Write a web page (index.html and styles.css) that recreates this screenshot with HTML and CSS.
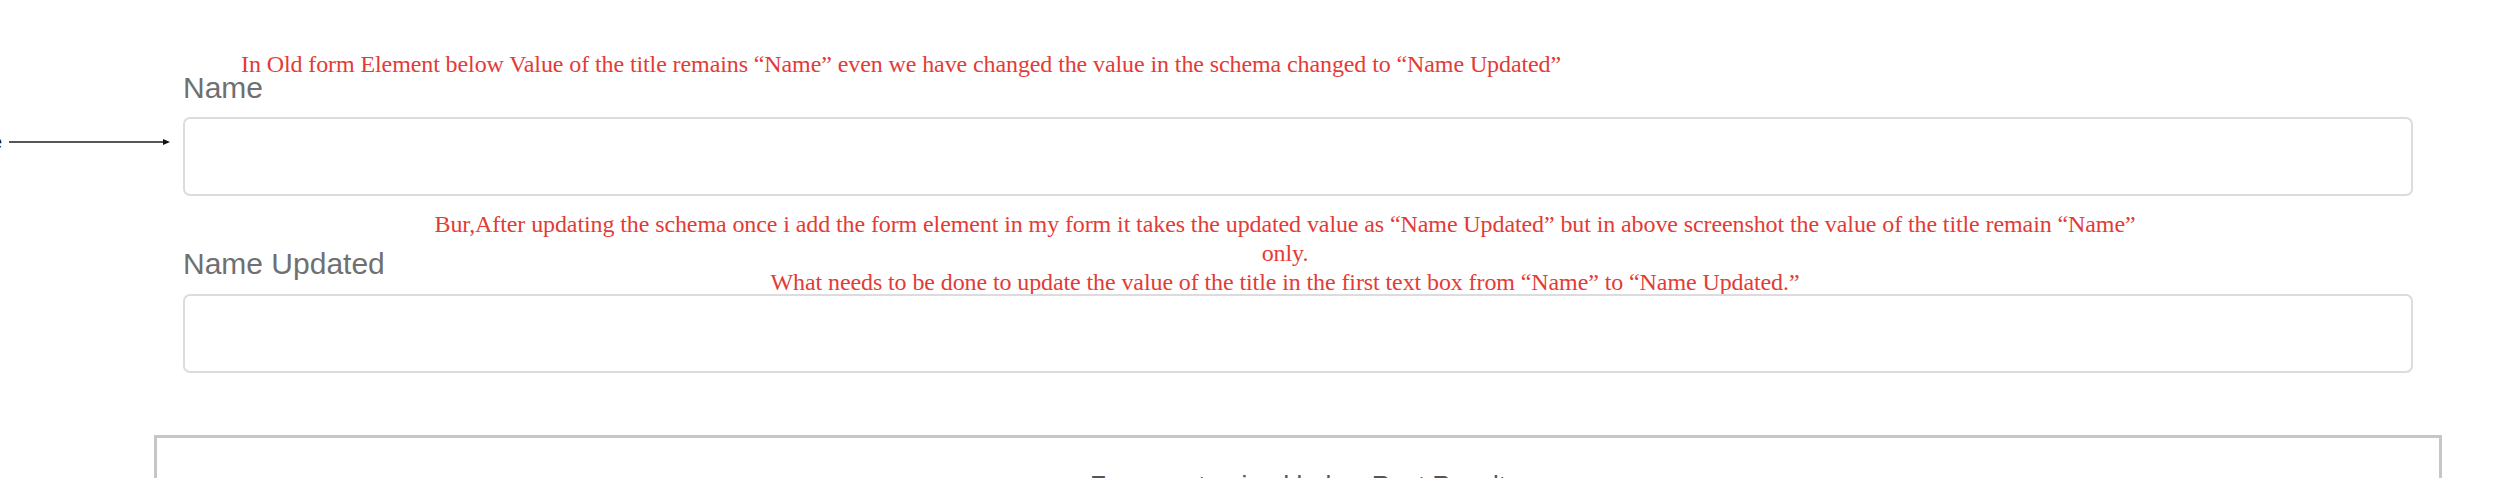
FILE: index.html
```html
<!DOCTYPE html>
<html lang="en">
  <head>
    <meta charset="UTF-8" />
    <meta name="viewport" content="width=device-width, initial-scale=1.0" />
    <title>Form title question</title>
    <link rel="stylesheet" href="styles.css">
  </head>
  <body>
    <div class="page">
      <div class="note note-top">In Old form Element below Value of the title remains “Name” even we have changed the value in the schema changed to “Name Updated”</div>

      <div class="field-label first">Name</div>
      <div class="field-row">
        <div class="pointer">
          <span class="cut">e</span>
          <svg class="arrow" width="170" height="10" viewBox="0 0 170 10">
            <line x1="6" y1="5" x2="162" y2="5" stroke="#1e1e1e" stroke-width="1.6" />
            <polygon points="160,2 167,5 160,8" fill="#111" />
          </svg>
        </div>
        <div class="input-box"></div>
      </div>

      <div class="second-block">
        <div class="field-label second">Name Updated</div>
        <div class="note note-center">
          Bur,After updating the schema once i add the form element in my form it takes the updated value as “Name Updated” but in above screenshot the value of the title remain “Name”<br>
          only.<br>
          What needs to be done to update the value of the title in the first text box from “Name” to “Name Updated.”
        </div>
      </div>
      <div class="field-row plain">
        <div class="input-box"></div>
      </div>

      <div class="panel">
        <div class="panel-title">Form customized below Rest Result</div>
      </div>
    </div>
  </body>
</html>
```

FILE: styles.css
```css
body {
  margin: 0;
  background: #fff;
  font-family: "Liberation Sans", Arial, sans-serif;
  overflow: hidden;
}
.page {
  width: 2507px;
  padding-top: 54px;
}
.note {
  font-family: "Liberation Serif", "Times New Roman", serif;
  font-size: 24px;
  color: #e33b36;
  letter-spacing: -0.1px;
}
.note-top {
  margin-left: 241px;
  line-height: 20px;
}
.field-label {
  font-size: 30px;
  line-height: 24px;
  color: #707070;
  margin-left: 183px;
}
.field-label.first {
  margin-top: 2px;
}
.field-row {
  display: flex;
  align-items: flex-start;
  margin-top: 17px;
  margin-right: 94px;
}
.field-row.plain {
  margin-top: -3px;
  margin-left: 183px;
}
.pointer {
  width: 183px;
  flex: none;
  display: flex;
  align-items: center;
  overflow: hidden;
  margin-top: 14px;
}
.cut {
  font-size: 20px;
  line-height: 22px;
  color: #111;
  margin-left: -9px;
  width: 12px;
}
.arrow {
  display: block;
}
.input-box {
  flex: 1;
  height: 79px;
  box-sizing: border-box;
  border: 2px solid #dcdcdc;
  border-radius: 7px;
}
.second-block {
  display: flex;
  align-items: flex-start;
  margin-top: 14px;
}
.field-label.second {
  flex: none;
  width: 214px;
  margin-top: 42px;
}
.note-center {
  width: 1776px;
  flex: none;
  text-align: center;
  line-height: 29px;
  white-space: nowrap;
}
.panel {
  margin-top: 62px;
  margin-left: 154px;
  width: 2288px;
  height: 120px;
  box-sizing: border-box;
  border: 3px solid #c6c6c6;
  border-bottom: none;
  text-align: center;
  padding-top: 32px;
}
.panel-title {
  font-size: 26px;
  line-height: 30px;
  color: #555;
}
```
